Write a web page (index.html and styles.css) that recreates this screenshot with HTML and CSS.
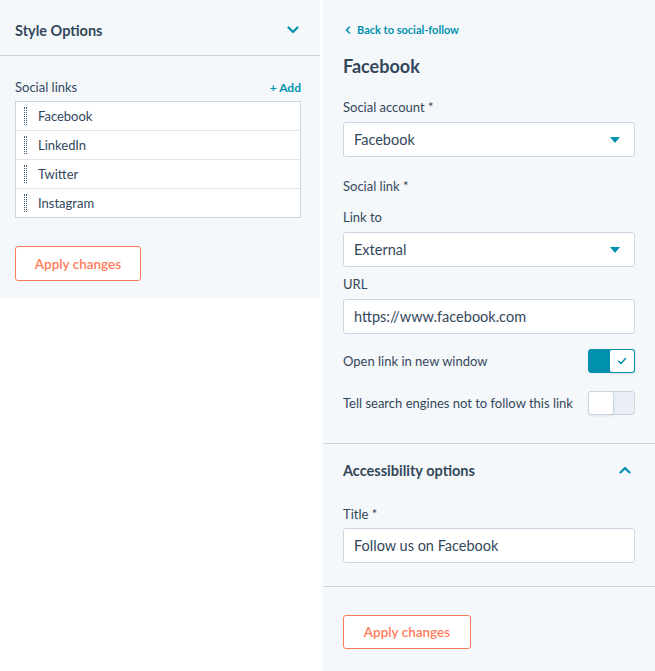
FILE: index.html
```html
<!DOCTYPE html>
<html lang="en">
<head>
  <meta charset="UTF-8">
  <meta name="viewport" content="width=device-width, initial-scale=1.0">
  <title>Social follow settings</title>
  <link rel="stylesheet" href="styles.css">
</head>
<body>
  <div class="sidebar">
    <div class="panel-header">
      <h3>Style Options</h3>
      <svg class="chevron" width="12" height="8" viewBox="0 0 12 8"><path d="M1.5 1.5 L6 6 L10.5 1.5" fill="none" stroke="#0091ae" stroke-width="2.2" stroke-linecap="round" stroke-linejoin="round"/></svg>
    </div>
    <div class="sidebar-body">
      <div class="list-head">
        <span class="label">Social links</span>
        <a class="add-link" href="#">+ Add</a>
      </div>
      <ul class="link-list">
        <li><span class="handle"></span>Facebook</li>
        <li><span class="handle"></span>LinkedIn</li>
        <li><span class="handle"></span>Twitter</li>
        <li><span class="handle"></span>Instagram</li>
      </ul>
      <button class="btn-apply" type="button">Apply changes</button>
    </div>
  </div>

  <div class="editor">
    <div class="editor-main">
      <a class="back-link" href="#">
        <svg width="6" height="8" viewBox="0 0 6 8"><path d="M4.5 1 L1.5 4 L4.5 7" fill="none" stroke="#0091ae" stroke-width="1.6" stroke-linecap="round" stroke-linejoin="round"/></svg>
        Back to social-follow
      </a>
      <h2>Facebook</h2>

      <label class="field-label first">Social account *</label>
      <div class="select">Facebook<span class="caret"></span></div>

      <div class="field-label group">Social link *</div>
      <label class="field-label">Link to</label>
      <div class="select">External<span class="caret"></span></div>

      <label class="field-label">URL</label>
      <div class="input">https://www.facebook.com</div>

      <div class="toggle-row">
        <span>Open link in new window</span>
        <span class="toggle on">
          <span class="knob">
            <svg width="10" height="8" viewBox="0 0 10 8"><path d="M1.5 4.2 L4 6.5 L8.5 1.5" fill="none" stroke="#0091ae" stroke-width="1.5" stroke-linecap="round" stroke-linejoin="round"/></svg>
          </span>
        </span>
      </div>
      <div class="toggle-row">
        <span>Tell search engines not to follow this link</span>
        <span class="toggle off"><span class="knob"></span></span>
      </div>
    </div>

    <div class="editor-section">
      <div class="section-head">
        <h3>Accessibility options</h3>
        <svg width="12" height="8" viewBox="0 0 12 8"><path d="M1.5 6.5 L6 2 L10.5 6.5" fill="none" stroke="#0091ae" stroke-width="2.2" stroke-linecap="round" stroke-linejoin="round"/></svg>
      </div>
      <label class="field-label">Title *</label>
      <div class="input">Follow us on Facebook</div>
    </div>

    <div class="editor-footer">
      <button class="btn-apply" type="button">Apply changes</button>
    </div>
  </div>
</body>
</html>
```

FILE: styles.css
```css
body {
  font-family: Lato, "Open Sans", sans-serif;
  color: #33475b;
  background-color: #ffffff;
  display: flex;
  align-items: flex-start;
  gap: 3px;
  margin: 0;
  height: 671px;
  overflow: hidden;
}
h2, h3 {
  margin: 0;
}
a {
  text-decoration: none;
}

/* left column */
.sidebar {
  width: 320px;
  background: #f5f8fa;
}
.panel-header {
  box-sizing: border-box;
  height: 56px;
  padding: 5px 21px 0 15px;
  display: flex;
  justify-content: space-between;
  align-items: center;
  border-bottom: 1px solid #cbd6e2;
}
.panel-header h3 {
  font-size: 14.5px;
  font-weight: 700;
}
.sidebar-body {
  padding: 23px 19px 17px 15px;
}
.list-head {
  display: flex;
  justify-content: space-between;
  align-items: center;
  height: 16px;
  margin-bottom: 6px;
}
.label {
  font-size: 13px;
}
.add-link {
  color: #0091ae;
  font-size: 12px;
  font-weight: 700;
}
.link-list {
  list-style: none;
  margin: 0;
  padding: 0;
  background: #fff;
  border: 1px solid #cbd6e2;
}
.link-list li {
  height: 28px;
  display: flex;
  align-items: center;
  font-size: 13px;
  border-top: 1px solid #dfe3eb;
}
.link-list li:first-child {
  border-top: none;
}
.handle {
  width: 1px;
  height: 18px;
  margin: 0 11px 0 8px;
  border-left: 1px dotted #425b76;
  border-right: 1px dotted #425b76;
}
.btn-apply {
  display: block;
  margin-top: 28px;
  background: #fff;
  color: #ff7a59;
  border: 1px solid #ff7a59;
  border-radius: 3px;
  font-family: inherit;
  font-size: 13.5px;
  font-weight: 600;
  width: 126px;
  height: 35px;
  padding: 0;
  cursor: pointer;
}

/* right column */
.editor {
  width: 332px;
  height: 671px;
  background: #f5f8fa;
}
.editor-main {
  padding: 23px 20px 28px;
  border-bottom: 1px solid #cbd6e2;
}
.back-link {
  display: flex;
  align-items: center;
  gap: 6px;
  color: #0091ae;
  font-size: 11px;
  font-weight: 700;
  line-height: 14px;
  padding-left: 2px;
}
.editor h2 {
  font-size: 18px;
  font-weight: 700;
  line-height: 22px;
  margin-top: 18px;
}
.field-label {
  display: block;
  font-size: 13px;
  line-height: 16px;
  margin: 9px 0 7px;
}
.field-label.first {
  margin-top: 22px;
}
.field-label.group {
  margin-top: 21px;
  margin-bottom: 15px;
}
.select,
.input {
  box-sizing: border-box;
  height: 35px;
  background: #fff;
  border: 1px solid #cbd6e2;
  border-radius: 3px;
  padding: 0 10px;
  display: flex;
  align-items: center;
  justify-content: space-between;
  font-size: 14.5px;
}
.caret {
  width: 0;
  height: 0;
  margin-right: 4px;
  border-left: 5.5px solid transparent;
  border-right: 5.5px solid transparent;
  border-top: 6px solid #0091ae;
}
.toggle-row {
  display: flex;
  justify-content: space-between;
  align-items: center;
  font-size: 13px;
  margin-top: 15px;
}
.toggle-row + .toggle-row {
  margin-top: 18px;
}
.toggle {
  width: 47px;
  height: 24px;
  box-sizing: border-box;
  border-radius: 3px;
  display: flex;
  border: 1px solid #cbd6e2;
}
.toggle.on {
  background: #0091ae;
  border-color: #0091ae;
  justify-content: flex-end;
}
.toggle.off {
  background: #eaf0f6;
  justify-content: flex-start;
}
.knob {
  width: 24px;
  margin: -1px;
  background: #fff;
  border: 1px solid #cbd6e2;
  border-radius: 3px;
  display: flex;
  align-items: center;
  justify-content: center;
  box-shadow: 0 1px 3px rgba(45, 62, 80, 0.12);
}
.toggle.on .knob {
  border-color: #0091ae;
}
.editor-section {
  padding: 17px 20px 23px;
  border-bottom: 1px solid #cbd6e2;
}
.section-head {
  display: flex;
  justify-content: space-between;
  align-items: center;
  padding-right: 4px;
  height: 18px;
  margin-bottom: 27px;
}
.section-head h3 {
  font-size: 14.5px;
  font-weight: 700;
}
.editor-section .field-label {
  margin-top: 0;
  margin-bottom: 6px;
}
.editor-footer {
  padding: 28px 20px;
}
.editor-footer .btn-apply {
  margin-top: 0;
  width: 128px;
  height: 34px;
}
```
